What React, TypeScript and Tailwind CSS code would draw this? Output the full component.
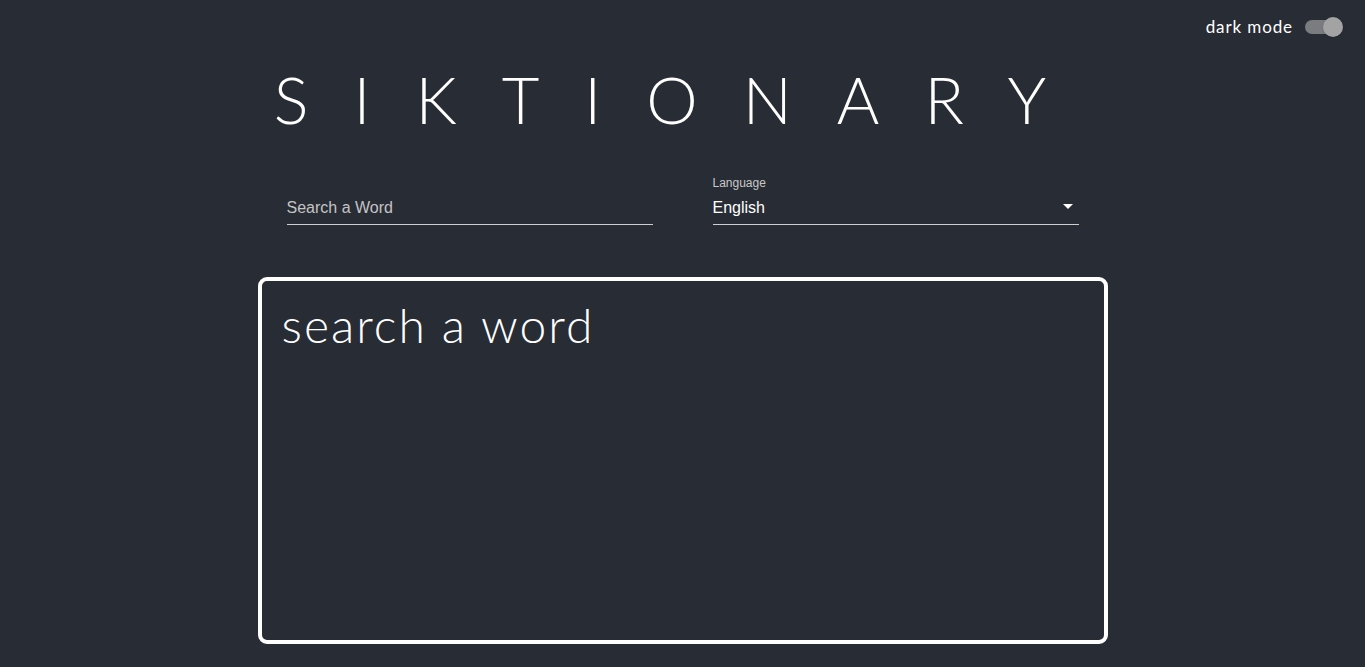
import React, { useState } from "react";

const languages = ["English", "Hindi", "Spanish", "French", "German"];

const App = () => {
  const [dark, setDark] = useState(true);
  const [word, setWord] = useState("");
  const [lang, setLang] = useState("English");

  return (
    <div className="min-h-screen bg-[#282c34] text-white font-['Lato','Noto_Sans',sans-serif]">
      {/* header toggle */}
      <div className="flex justify-end items-center h-[54px] pr-[22px] gap-3">
        <span className="text-[17px] font-normal text-white tracking-[0.9px]">dark mode</span>
        <button
          onClick={() => setDark(!dark)}
          className="relative w-[38px] h-[20px] flex items-center"
        >
          <span className="block w-[34px] h-[14px] rounded-full bg-[#7a7c80]" />
          <span
            className={
              dark
                ? "absolute right-0 top-0 w-[20px] h-[20px] rounded-full bg-[#a3a3a3] shadow"
                : "absolute left-0 top-0 w-[20px] h-[20px] rounded-full bg-[#a3a3a3] shadow"
            }
          />
        </button>
      </div>

      <div className="flex flex-col items-center">
        <h1 className="text-[65px] leading-[90px] font-light tracking-[45px] text-white">
          SIKTIONARY
        </h1>

        <div className="mt-[31px] grid grid-cols-2 gap-[60px] w-[792px] font-['Liberation_Sans',Arial,sans-serif]">
          <div className="flex flex-col">
            <div className="h-[16px]" />
            <input
              value={word}
              onChange={(e) => setWord(e.target.value)}
              placeholder="Search a Word"
              className="h-[34px] bg-transparent border-b border-[#cfcfcf] text-[16px] text-white placeholder:text-[#c4c4c4] outline-none"
            />
          </div>
          <div className="flex flex-col">
            <label className="h-[16px] text-[12px] leading-[16px] text-[#c8c8c8]">Language</label>
            <div className="relative h-[34px] border-b border-[#cfcfcf] flex items-center">
              <select
                value={lang}
                onChange={(e) => setLang(e.target.value)}
                className="w-full h-full appearance-none bg-transparent text-[16px] text-white outline-none"
              >
                {languages.map((l) => (
                  <option key={l} value={l} className="text-black">
                    {l}
                  </option>
                ))}
              </select>
              <svg
                className="absolute right-[6px] top-[13px] pointer-events-none"
                width="10"
                height="5"
                viewBox="0 0 10 5"
              >
                <path d="M0 0 L10 0 L5 5 Z" fill="#ffffff" />
              </svg>
            </div>
          </div>
        </div>

        <div className="mt-[52px] w-[850px] h-[367px] border-4 border-white rounded-[9px] px-[20px] pt-[16px]">
          <p className="text-[48px] font-light leading-[56px] tracking-[2px] text-white">search a word</p>
        </div>
      </div>
    </div>
  );
};

export default App;
